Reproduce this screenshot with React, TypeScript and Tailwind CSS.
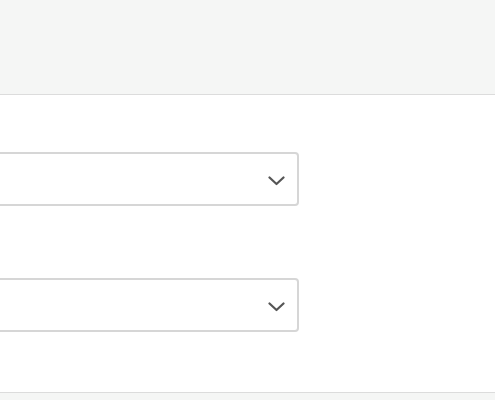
function SelectBox() {
  return (
    <div className="relative -ml-[6px] w-[305px]">
      <div
        role="combobox"
        className="h-[54px] w-full rounded-[4px] border-2 border-[#d6d6d6] bg-white px-3 text-sm text-[#333]"
      />
      <svg
        className="pointer-events-none absolute right-[14px] top-[24px] text-[#555]"
        width="17"
        height="10"
        viewBox="0 0 17 10"
        fill="none"
      >
        <polyline
          points="1.5,1.5 8.5,8 15.5,1.5"
          stroke="currentColor"
          strokeWidth="2.2"
          strokeLinecap="round"
          strokeLinejoin="round"
        />
      </svg>
    </div>
  );
}

export default function App() {
  return (
    <div className="h-[400px] w-full overflow-hidden bg-white font-['Liberation_Sans',sans-serif]">
      <header className="h-[95px] border-b border-[#dcdcdc] bg-[#f5f6f5]" />
      <main className="flex h-[298px] flex-col gap-[72px] border-b border-[#dcdcdc] pt-[57px]">
        <SelectBox />
        <SelectBox />
      </main>
      <footer className="h-[7px] bg-[#f5f6f5]" />
    </div>
  );
}
